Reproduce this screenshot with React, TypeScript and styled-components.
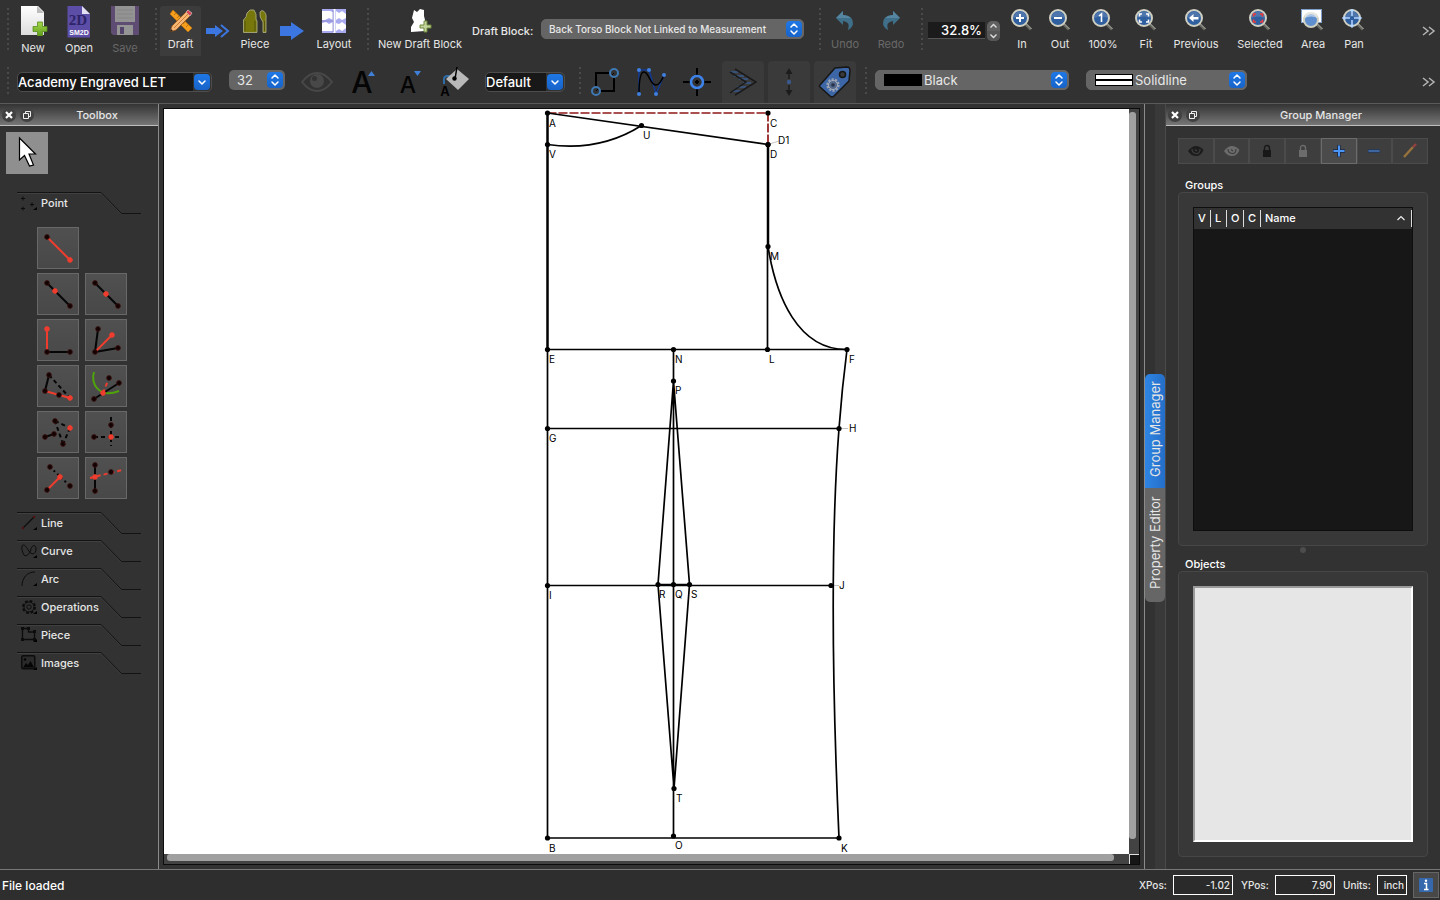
import React from "react";
import styled, { createGlobalStyle, css } from "styled-components";

const GlobalStyle = createGlobalStyle`
  *, *::before, *::after { box-sizing: border-box; }
  html, body { margin: 0; padding: 0; background: #323232; }
  body, button, input, select {
    font-family: Inter, "Liberation Sans", sans-serif;
    font-size: 11px;
    color: #e6e6e6;
  }
  button { margin: 0; padding: 0; border: 0; background: none; }
  svg { display: block; }
`;

/* ---------- shell ---------- */

const Window = styled.div`
  display: flex;
  flex-direction: column;
  min-height: 100vh;
  background: #323232;
`;

const Toolbars = styled.header`
  border-bottom: 1px solid #5a5a5a;
`;

const Toolbar = styled.div<{ $height: number }>`
  display: flex;
  align-items: center;
  height: ${(p) => p.$height}px;
  overflow: hidden;
  white-space: nowrap;
`;

const ToolGroup = styled.div<{ $lead?: number }>`
  display: flex;
  align-items: center;
  flex: none;
  padding-left: ${(p) => p.$lead ?? 0}px;
`;

const Handle = styled.span<{ $dots: number }>`
  flex: none;
  width: 10px;
  height: ${(p) => p.$dots * 5}px;
  background: linear-gradient(#4a4a4a 2px, transparent 2px) 7px 0 / 2px 5px repeat-y;
`;

const ToolButton = styled.button<{ $width: number; $large?: boolean; $active?: boolean }>`
  display: flex;
  flex-direction: column;
  align-items: center;
  flex: none;
  gap: ${(p) => (p.$large ? 5 : 4)}px;
  width: ${(p) => p.$width}px;
  height: 50px;
  padding-top: ${(p) => (p.$large ? 0 : 3)}px;
  border-radius: 3px 3px 0 0;
  line-height: 14px;
  background: ${(p) => (p.$active ? "#3c3c3c" : "transparent")};
  &:disabled { color: #696969; }
`;

const IconClip = styled.span`
  display: block;
  height: 30px;
`;

const IconButton = styled.button<{ $active?: boolean }>`
  display: flex;
  align-items: center;
  justify-content: center;
  flex: none;
  width: 46px;
  height: 42px;
  ${(p) =>
    p.$active &&
    css`
      width: 42px;
      margin: 0 2px;
      background: #3a3a3a;
      border-radius: 4px 4px 0 0;
    `}
`;

const FlowArrow = styled.span`
  display: flex;
  justify-content: center;
  width: 34px;
`;

const Overflow = styled.button`
  margin-left: auto;
  padding-right: 4px;
`;

const BlockLabel = styled.label`
  flex: none;
  width: 69px;
  font-weight: 500;
`;

const SelectWrap = styled.span<{ $width: number; $dark?: boolean; $lead?: number }>`
  position: relative;
  display: flex;
  flex: none;
  width: ${(p) => p.$width}px;
  margin-left: ${(p) => p.$lead ?? 0}px;
  margin-top: ${(p) => (p.$dark ? 0 : -4)}px;
`;

const Select = styled.select<{ $dark?: boolean; $small?: boolean; $indent?: number }>`
  appearance: none;
  width: 100%;
  height: 20px;
  margin: 0;
  padding: 0 20px 0 ${(p) => p.$indent ?? 0}px;
  border: 1px solid ${(p) => (p.$dark ? "#4d4d4d" : "#666")};
  border-radius: 5px;
  background: ${(p) =>
    p.$dark ? "linear-gradient(90deg, #181818 calc(100% - 18px), #323232 calc(100% - 18px))" : "#656565"};
  font-size: ${(p) => (p.$small ? 10 : 13)}px;
  font-weight: ${(p) => (p.$small || p.$dark ? 500 : 400)};
  color: ${(p) => (p.$dark ? "#fff" : "#e8e8e8")};
`;

const BlueCap = styled.span`
  position: absolute;
  top: 2px;
  right: 2px;
  width: 16px;
  height: 16px;
  border-radius: 4px;
  background: linear-gradient(#1f78e6, #1763c9);
  pointer-events: none;
`;

const Swatch = styled.span<{ $lined?: boolean }>`
  position: absolute;
  left: 9px;
  top: 4px;
  width: 38px;
  height: 12px;
  border: 1px solid #000;
  background: ${(p) => (p.$lined ? "linear-gradient(#fff 4px, #000 4px, #000 6px, #fff 6px)" : "#000")};
  pointer-events: none;
`;

const SizeInput = styled.input`
  width: 100%;
  height: 20px;
  padding: 0 20px 0 8px;
  border: 0;
  border-radius: 5px;
  background: #656565;
  font-size: 13px;
`;

const ZoomInput = styled.input`
  width: 57px;
  height: 17px;
  padding: 0 3px 0 0;
  border: 0;
  border-bottom: 1px solid #555;
  background: #1b1b1b;
  font-size: 13px;
  font-weight: 500;
  color: #fff;
  text-align: right;
`;

const Stepper = styled.span`
  display: flex;
  flex-direction: column;
  width: 13px;
  height: 20px;
  margin: 0 3px 0 2px;
  border-radius: 5px;
  overflow: hidden;
  background: #606060;
`;

const StepButton = styled.button`
  display: flex;
  align-items: center;
  justify-content: center;
  height: 10px;
  & + & { background: #565656; }
`;

const Workspace = styled.main`
  display: flex;
  flex: 1;
`;

/* ---------- toolbox ---------- */

const Toolbox = styled.aside`
  flex: none;
  width: 159px;
  border-right: 1px solid #8b8b8b;
`;

const DockTitle = styled.div`
  display: flex;
  align-items: center;
  height: 22px;
  padding: 0 2px;
  background: linear-gradient(#343434, #767676);
  border-bottom: 1px solid #bdbdbd;
`;

const DockName = styled.h2`
  flex: 1;
  margin: 0;
  font-size: 11px;
  font-weight: 500;
  text-align: center;
`;

const DockButton = styled.button`
  width: 14px;
  height: 14px;
  margin-right: 4px;
  border-radius: 7px;
  background: #414141;
`;

const PointerTool = styled.button`
  display: block;
  width: 42px;
  height: 42px;
  margin: 6px 0 18px 6px;
  background: #8f8f8f;
`;

const Drawers = styled.nav`
  display: flex;
  flex-direction: column;
  gap: 6px;
  padding-left: 17px;
`;

const Drawer = styled.button`
  position: relative;
  display: flex;
  align-items: center;
  gap: 3px;
  width: 124px;
  height: 22px;
  padding-left: 4px;
  font-weight: 500;
`;

const DrawerEdge = styled.svg`
  position: absolute;
  left: 0;
  top: 0;
`;

const Tiles = styled.div`
  display: grid;
  grid-template-columns: 42px 42px;
  gap: 4px 6px;
  padding: 7px 0 7px 20px;
`;

const Tile = styled.button<{ $wide?: boolean }>`
  width: 42px;
  height: 42px;
  border: 1px solid #686868;
  background: linear-gradient(#505050, #484848);
  ${(p) => p.$wide && "grid-column: 1 / 3;"}
`;

/* ---------- drawing area ---------- */

const CanvasArea = styled.section`
  display: flex;
  flex: 1;
  min-width: 0;
  padding: 4px;
`;

const CanvasFrame = styled.div`
  display: grid;
  flex: 1;
  grid-template: minmax(0, 1fr) 10px / minmax(0, 1fr) 10px;
  min-height: 757px;
  border: 1px solid #0c0c0c;
  background: #434343;
`;

const Sheet = styled.div`
  display: flex;
  background: #fff;
`;

const Drawing = styled.svg`
  width: 100%;
  height: 100%;
  font-size: 10px;
`;

const VTrack = styled.div`
  display: flex;
  padding: 3px 3px 15px 0;
`;

const HTrack = styled.div`
  display: flex;
  padding: 0 15px 3px 3px;
`;

const Thumb = styled.div`
  flex: 1;
  background: #a0a0a0;
  border-radius: 3px;
`;

const Corner = styled.div`
  border: solid #e0e0e0;
  border-width: 1px 0 0 1px;
  background: #161616;
`;

/* ---------- right docks ---------- */

const RightDock = styled.aside`
  display: flex;
  flex: none;
  width: 296px;
  border-left: 1px solid #8b8b8b;
`;

const DockTabs = styled.div`
  display: flex;
  flex-direction: column;
  justify-content: center;
  width: 21px;
  padding-top: 3px;
  background: linear-gradient(90deg, #323232 10px, #393939 10px);
  border-right: 1px solid #4a4a4a;
`;

const DockTab = styled.button<{ $active?: boolean }>`
  height: 114px;
  writing-mode: vertical-rl;
  transform: rotate(180deg);
  text-align: center;
  padding-top: 4px;
  font-size: 13px;
  line-height: 20px;
  white-space: nowrap;
  border-radius: ${(p) => (p.$active ? "0 0 5px 5px" : "5px 5px 0 0")};
  background: ${(p) => (p.$active ? "linear-gradient(270deg, #2f85e4, #246ec8)" : "#666")};
`;

const Panel = styled.div`
  display: flex;
  flex: 1;
  flex-direction: column;
`;

const PanelBody = styled.div`
  display: flex;
  flex: 1;
  flex-direction: column;
  padding: 12px;
`;

const GroupTools = styled.div`
  display: flex;
  height: 26px;
  margin-bottom: 14px;
`;

const GroupTool = styled.button<{ $active?: boolean }>`
  display: flex;
  align-items: center;
  justify-content: center;
  flex: 1;
  border: 1px solid ${(p) => (p.$active ? "#6b6b6b" : "#4b4b4b")};
  background: ${(p) => (p.$active ? "#4b4b4b" : "#3e3e3e")};
`;

const SectionTitle = styled.h3`
  margin: 0;
  padding-left: 7px;
  font-size: 11px;
  line-height: 14px;
  font-weight: 500;
  color: #fff;
`;

const Box = styled.section<{ $share: number }>`
  display: flex;
  flex: ${(p) => p.$share} ${(p) => p.$share} ${(p) => p.$share}px;
  padding: 14px;
  border: 1px solid #464646;
  border-radius: 4px;
  background: #383838;
`;

const Splitter = styled.div`
  align-self: center;
  width: 6px;
  height: 6px;
  margin: 1px 0 4px;
  border-radius: 3px;
  background: #4c4c4c;
`;

const Tree = styled.div`
  flex: 1;
  border: 1px solid #0e0e0e;
  background: #171717;
`;

const TreeTable = styled.table`
  width: 100%;
  table-layout: fixed;
  border-collapse: collapse;
  background: #323232;
`;

const Th = styled.th<{ $width?: number }>`
  width: ${(p) => (p.$width ? `${p.$width}px` : "auto")};
  height: 21px;
  padding: 0 0 2px 4px;
  font-weight: 500;
  color: #fff;
  text-align: left;
  background: linear-gradient(#dcdcdc, #dcdcdc) right center / 1px 17px no-repeat;
`;

const SortRow = styled.span`
  display: flex;
  align-items: center;
  justify-content: space-between;
  padding-right: 6px;
`;

const ObjectList = styled.div`
  flex: 1;
  border: 2px solid #fff;
  border-top-color: #9a9a9a;
  border-left-color: #9a9a9a;
  background: #e6e6e6;
`;

/* ---------- status bar ---------- */

const StatusBar = styled.footer`
  display: flex;
  align-items: center;
  height: 31px;
  padding: 0 1px 0 2px;
  border-top: 1px solid #777;
  background: #2e2e2e;
`;

const StatusText = styled.span`
  flex: 1;
  font-size: 12px;
  font-weight: 500;
  color: #fff;
`;

const StatusField = styled.label<{ $width: number }>`
  display: grid;
  grid-template-columns: ${(p) => p.$width}px auto;
  align-items: center;
  margin-left: 8px;
  font-size: 10px;
  font-weight: 500;
`;

const StatusInput = styled.input<{ $width: number }>`
  width: ${(p) => p.$width}px;
  height: 20px;
  padding: 0 2px;
  border: 1px solid #fff;
  background: #2a2a2a;
  font-size: 10px;
  font-weight: 500;
  text-align: right;
`;

const InfoButton = styled.button`
  display: flex;
  align-items: center;
  justify-content: center;
  width: 26px;
  height: 26px;
  margin-left: 6px;
  border: 1px solid #666;
  background: #484848;
`;

/* ---------- icons ---------- */

const NewIcon = () => (
  <svg width="30" height="30" viewBox="0 0 30 30">
    <defs>
      <linearGradient id="paper" x1="0" y1="0" x2="0" y2="1">
        <stop offset="0" stopColor="#fff" />
        <stop offset="1" stopColor="#dcdcdc" />
      </linearGradient>
      <linearGradient id="green" x1="0" y1="0" x2="0" y2="1">
        <stop offset="0" stopColor="#a6d84c" />
        <stop offset="1" stopColor="#5f9c1c" />
      </linearGradient>
    </defs>
    <path d="M3 0H20L26 6V29H3Z" fill="url(#paper)" />
    <path d="M19 0V7H26Z" fill="#bcbcbc" />
    <path d="M19.500 16h5v4.500H29v5h-4.500V30h-5v-4.500H15v-5h4.500Z" fill="url(#green)" stroke="#568c1d" strokeWidth="0.800" />
  </svg>
);

const OpenIcon = () => (
  <svg width="30" height="32" viewBox="0 0 30 32">
    <path d="M3.500 0H18L26 8V31.500H3.500Z" fill="#5c4da6" />
    <path d="M18 0L26 8H18Z" fill="#e4e0f2" />
    <text x="14" y="19" textAnchor="middle" fontFamily="Liberation Serif, serif" fontWeight="bold" fontSize="15" fill="#2c2468">2D</text>
    <text x="15" y="29" textAnchor="middle" fontFamily="Liberation Sans, sans-serif" fontWeight="bold" fontSize="7" fill="#fff">SM2D</text>
  </svg>
);

const SaveIcon = () => (
  <svg width="30" height="30" viewBox="0 0 30 30">
    <path d="M1 0H29V29H3L1 27Z" fill="#5f4c73" />
    <rect x="5" y="0" width="20" height="16" fill="#939393" />
    <path d="M7 4H23M7 8H23M7 12H23" stroke="#858585" />
    <rect x="7" y="19" width="16" height="10" fill="#959595" />
    <rect x="10" y="21" width="4" height="7" fill="#54436a" />
  </svg>
);

const DraftIcon = () => (
  <svg width="24" height="24" viewBox="0 0 24 24">
    <path d="M4 1L23 19L19 23L1 5Z" fill="#f59d1c" stroke="#c87509" strokeWidth="0.600" />
    <path d="M5 6l2-2M8 9l2-2M14 15l2-2M17 18l2-2" stroke="#b06f0e" strokeWidth="0.800" />
    <path d="M1 23L3 17L17 3L21 7L7 21Z" fill="#f5b673" stroke="#8e4a12" strokeWidth="0.700" />
    <path d="M5 19L19 5" stroke="#d07a30" />
    <path d="M1 23L2 20L4 22Z" fill="#222" />
    <path d="M17 3L19 1L23 4L21 7Z" fill="#d84452" stroke="#ddd" strokeWidth="0.600" />
  </svg>
);

const DoubleArrow = () => (
  <svg width="24" height="14" viewBox="0 0 24 14">
    <path d="M0 4H9V1L17 7L9 13V10H0Z" fill="#3c76e0" />
    <path d="M15 1L22 7L15 13" fill="none" stroke="#3c76e0" strokeWidth="2" />
  </svg>
);

const BigArrow = () => (
  <svg width="24" height="18" viewBox="0 0 24 18">
    <path d="M0 4H11V0L24 9L11 18V14H0Z" fill="#3c76e0" />
  </svg>
);

const PieceIcon = () => (
  <svg width="24" height="24" viewBox="0 0 24 24">
    <g fill="#77770c" stroke="#a9a97c" strokeWidth="0.900">
      <path d="M0.500 23.500V11Q4 8 4 4L7 1H11Q14 5 13 10L14 12V23.500Z" />
      <path d="M20 23.500V13Q16 8 17 3L19 1.500Q24 3 23 10V23.500Z" />
    </g>
    <path d="M2 22V12M12 22V12M21.500 22V12" stroke="#55550a" />
  </svg>
);

const LayoutIcon = () => (
  <svg width="24" height="24" viewBox="0 0 24 24">
    <rect width="24" height="24" fill="#a9a9f0" />
    <path d="M0 2H8L11 3V11L7 9L3 11H0ZM0 14L4 13L7 15L11 13V22H0ZM14 2L17 4L20 2L24 5V9L20 11L17 9L14 11ZM14 14L17 15L20 13L24 16V19L20 22L17 20L14 22Z" fill="#fff" />
    <path d="M12.500 0V24" stroke="#fff" strokeWidth="2" />
    <path d="M11 1V23M0 12H10" stroke="#7f7fc4" strokeWidth="0.700" />
  </svg>
);

const BlockIcon = () => (
  <svg width="24" height="24" viewBox="0 0 24 24">
    <path d="M6 1L9 3L12 0L16 1V7L17 11L17 22L3 23L3 18L6 13L4 9Z" fill="#fff" />
    <path d="M16 12h3v4h4v3h-4v4h-3v-4h-4v-3h4Z" fill="#c3d39c" stroke="#6c8a3a" />
  </svg>
);

const UndoIcon = ({ flip }: { flip?: boolean }) => (
  <svg width="24" height="24" viewBox="0 0 24 24">
    <g transform={flip ? "matrix(-1 0 0 1 24 0)" : undefined}>
      <path d="M3 9L10 2V6Q21 7 20 15Q19 19 15 21Q18 13 10 12V16Z" fill="#3f6f89" />
      <path d="M3 9L10 2V6Q15 6 18 9Z" fill="#5585a0" />
    </g>
  </svg>
);

type LensKind = "in" | "out" | "one" | "fit" | "prev" | "sel" | "area" | "pan";

const LensIcon = ({ kind }: { kind: LensKind }) => (
  <svg width="24" height="24" viewBox="0 0 24 24">
    {kind === "area" && <rect x="0.500" y="0.500" width="20" height="13" fill="#fff" stroke="#7fa0cc" />}
    <path d="M15 14.500L21 20.500" stroke="#686862" strokeWidth="3" />
    <path d="M15 13.500L21.500 20" stroke="#a9a9a0" strokeWidth="1" />
    <circle cx="10" cy={kind === "area" ? 11 : 9} r={kind === "area" ? 7 : 8} fill={kind === "area" ? "#5f8fce" : "#2f5f9f"} stroke="#cfcfc2" strokeWidth="2" />
    <path d="M3.500 9A6.500 6.500 0 0 1 16.500 9Q10 6 3.500 9Z" fill="#fff" opacity={kind === "area" ? 0.5 : 0.15} />
    {kind === "in" && <path d="M10 5V13M6 9H14" stroke="#fff" strokeWidth="2" />}
    {kind === "out" && <path d="M6 9H14" stroke="#fff" strokeWidth="2" />}
    {kind === "one" && <path d="M8 7L10.500 5V13" fill="none" stroke="#fff" strokeWidth="1.600" />}
    {(kind === "fit" || kind === "sel") && (
      <path
        d="M5.500 7.500V5H8M12 5H14.500V7.500M14.500 10.500V13H12M8 13H5.500V10.500"
        fill={kind === "fit" ? "none" : "#5c5f80"}
        stroke={kind === "fit" ? "#fff" : "#f03b3b"}
        strokeWidth="1.600"
      />
    )}
    {kind === "prev" && <path d="M5 9L9.500 5V8H14.500V10.500H9.500V13Z" fill="#fff" />}
    {kind === "pan" && (
      <path d="M10 0V7M10 11V18M1 9H8M12 9H19M8.500 2L10 0L11.500 2M8.500 16L10 18L11.500 16M3 7.500L1 9L3 10.500M17 7.500L19 9L17 10.500" fill="none" stroke="#b5d6ff" strokeWidth="1.500" />
    )}
  </svg>
);

const Chevrons = () => (
  <svg width="14" height="10" viewBox="0 0 14 10">
    <path d="M1 1L6 5L1 9M7 1L12 5L7 9" fill="none" stroke="#b4b4b4" strokeWidth="1.500" />
  </svg>
);

const CapArrows = ({ single }: { single?: boolean }) => (
  <BlueCap>
    <svg width="16" height="16" viewBox="0 0 16 16">
      <path
        d={single ? "M5 7L8 10L11 7" : "M5 6L8 3L11 6M5 10L8 13L11 10"}
        fill="none"
        stroke="#fff"
        strokeWidth="1.500"
        strokeLinecap="round"
        strokeLinejoin="round"
      />
    </svg>
  </BlueCap>
);

const BigEyeIcon = () => (
  <svg width="32" height="22" viewBox="0 0 32 22">
    <path d="M1 11Q8 2 16 2T31 11Q24 20 16 20T1 11Z" fill="none" stroke="#484848" strokeWidth="2" />
    <circle cx="16" cy="10" r="7" fill="#484848" />
    <circle cx="13.500" cy="7.500" r="2.500" fill="#333" />
  </svg>
);

const LetterIcon = ({ down }: { down?: boolean }) => (
  <svg width="32" height="40" viewBox="-2 -6 32 40">
    <text x="13" y="25" textAnchor="middle" fontSize={down ? 23 : 30} fontWeight="500" fill="#050505">A</text>
    <path d={down ? "M19 3H26L22.500 8Z" : "M19 8H26L22.500 3Z"} fill="#4080d8" />
  </svg>
);

const BucketIcon = () => (
  <svg width="32" height="38" viewBox="-2 -4 32 38">
    <path d="M3 17V12Q3 9 7 9H10" fill="none" stroke="#2f6da8" strokeWidth="2" />
    <path d="M5 12L16 2L28 12L17 23Z" fill="#b9b9b9" />
    <path d="M16 0L14 12" stroke="#000" strokeWidth="1.500" />
    <circle cx="13.500" cy="11.500" r="2.200" fill="#000" />
    <text x="4" y="29" textAnchor="middle" fontSize="13" fontWeight="600" fill="#000">A</text>
  </svg>
);

const SquareNodesIcon = () => (
  <svg width="28" height="28" viewBox="0 0 28 28">
    <rect x="5" y="5" width="18" height="18" fill="none" stroke="#000" strokeWidth="2" />
    <circle cx="23" cy="5" r="4" fill="#323232" stroke="#3f79b3" strokeWidth="2" />
    <circle cx="5" cy="23" r="4" fill="#323232" stroke="#3f79b3" strokeWidth="2" />
    <path d="M21 7L23 5M5 23L7 21" stroke="#000" />
  </svg>
);

const CurveNodesIcon = () => (
  <svg width="30" height="30" viewBox="0 0 30 30">
    <path d="M3 27V3H13L20 27L28 8" fill="none" stroke="#123a94" strokeWidth="1.500" />
    <path d="M3 27Q3 5 8 5C13 5 14 18 20 18Q24 18 28 8" fill="none" stroke="#000" strokeWidth="1.500" />
    {[[3, 27], [3, 3], [13, 3], [20, 27], [28, 8]].map(([x, y]) => (
      <circle key={`${x}-${y}`} cx={x} cy={y} r="2" fill="#3f80e0" />
    ))}
  </svg>
);

const CrosshairIcon = () => (
  <svg width="28" height="28" viewBox="0 0 28 28">
    <path d="M14 0V9M14 19V28M0 14H9M19 14H28M12 14H16M14 12V16" stroke="#000" strokeWidth="2" />
    <circle cx="14" cy="14" r="6" fill="none" stroke="#3e83ea" strokeWidth="2.600" />
  </svg>
);

const HatchIcon = () => (
  <svg width="28" height="28" viewBox="0 0 28 28">
    <path d="M1 4H9M5 8H15M10 11H19M14 15H22M8 19H17M4 23H12" stroke="#38598f" strokeWidth="1.500" />
    <path d="M6 1L27 14L6 27M1 4L17 14L1 25" fill="none" stroke="#1a1a1a" strokeWidth="1.500" />
  </svg>
);

const SpreadIcon = () => (
  <svg width="10" height="28" viewBox="0 0 10 28">
    <path d="M5 3V11M5 17V25" stroke="#1c1c1c" strokeWidth="1.500" />
    <path d="M1.500 6L5 0L8.500 6ZM1.500 22L5 28L8.500 22Z" fill="#1c1c1c" />
    <circle cx="5" cy="14" r="2.200" fill="#39598c" />
  </svg>
);

const TagIcon = () => (
  <svg width="34" height="34" viewBox="0 0 34 34">
    <path d="M2 20L17 3L29 2Q32 2 32 6L31 16L16 31Q14 33 12 31L2 22Q1 21 2 20Z" fill="#3c66a6" stroke="#161616" strokeWidth="1.500" />
    <circle cx="24.500" cy="9.500" r="3" fill="#3a3a3a" stroke="#161616" strokeWidth="1.500" />
    <circle cx="15" cy="20" r="5.500" fill="none" stroke="#9aa3b2" strokeWidth="2.400" strokeDasharray="2.200 1.200" />
    <circle cx="15" cy="20" r="4.500" fill="#55698c" stroke="#a9b0bd" />
    <circle cx="15" cy="20" r="1.800" fill="#26324a" />
  </svg>
);

const CloseGlyph = () => (
  <svg width="14" height="14" viewBox="0 0 14 14">
    <path d="M4 4L10 10M10 4L4 10" stroke="#fff" strokeWidth="2.200" />
  </svg>
);

const FloatGlyph = () => (
  <svg width="14" height="14" viewBox="0 0 14 14">
    <path d="M5.500 5.500V3.500H10.500V8.500H8.500M3.500 5.500H8.500V10.500H3.500Z" fill="none" stroke="#eee" />
  </svg>
);

const PointerGlyph = () => (
  <svg width="42" height="42" viewBox="0 0 42 42">
    <path d="M13.500 6L13.500 28L18.500 23.500L23.500 34L27.500 33L23 22H29.500Z" fill="#fff" stroke="#000" strokeWidth="1.200" />
  </svg>
);

const EyeGlyph = ({ color }: { color: string }) => (
  <svg width="16" height="14" viewBox="0 0 16 14">
    <path d="M0 7Q4 2 8 2T15.500 6Q13 12 8 12T0 7Z" fill={color} />
    <path d="M4 5Q4 9 8 9.500T12 5M7 5.500L9 7" fill="none" stroke="#3e3e3e" strokeWidth="1.200" />
  </svg>
);

const LockGlyph = ({ color }: { color: string }) => (
  <svg width="10" height="14" viewBox="0 0 10 14">
    <rect x="1" y="6" width="8" height="7" fill={color} />
    <path d="M2.500 6V4Q2.500 1.500 5 1.500T7.500 4V6" fill="none" stroke={color} strokeWidth="1.400" />
  </svg>
);

const PlusGlyph = () => (
  <svg width="14" height="14" viewBox="0 0 14 14">
    <path d="M7 1V13M1 7H13" stroke="#182a48" strokeWidth="3.500" />
    <path d="M7 1.500V12.500M1.500 7H12.500" stroke="#4a94f5" strokeWidth="2" />
  </svg>
);

const MinusGlyph = () => (
  <svg width="14" height="14" viewBox="0 0 14 14">
    <path d="M1 7H13" stroke="#263a5c" strokeWidth="3.500" />
    <path d="M1.500 7H12.500" stroke="#3f659f" strokeWidth="2" />
  </svg>
);

const PencilGlyph = () => (
  <svg width="16" height="16" viewBox="0 0 16 16">
    <path d="M2 14L11 4" stroke="#96733a" strokeWidth="2.400" />
    <path d="M11 4L14 1" stroke="#964040" strokeWidth="2.400" />
  </svg>
);

const InfoGlyph = () => (
  <svg width="14" height="14" viewBox="0 0 14 14">
    <rect width="14" height="14" rx="1" fill="#3568ad" />
    <path d="M5 5.500H7.500V11.500M5 11.500H9.500" fill="none" stroke="#fff" strokeWidth="1.500" />
    <circle cx="7" cy="2.800" r="1.200" fill="#fff" />
  </svg>
);

/* ---------- point tool tiles ---------- */

type Seg = [number, number, number, number, ("k" | "r")?, ("dash" | "dot")?];
type Dot = [number, number, ("k" | "r")?];

interface TileSpec {
  name: string;
  segs: Seg[];
  dots: Dot[];
  arc?: string;
}

const RED = "#ee3d2e";

const tiles: TileSpec[] = [
  { name: "Length and angle", segs: [[10, 10, 33, 33, "r"]], dots: [[10, 10], [33, 33, "r"]] },
  { name: "On line", segs: [[10, 10, 33, 33]], dots: [[10, 10], [33, 33], [18, 18, "r"]] },
  { name: "Midpoint", segs: [[10, 10, 33, 33]], dots: [[10, 10], [33, 33], [21, 21, "r"]] },
  { name: "On perpendicular", segs: [[10, 33, 33, 33], [10, 10, 10, 33, "r"]], dots: [[10, 33], [33, 33], [10, 10, "r"]] },
  { name: "On bisector", segs: [[10, 33, 13, 10], [10, 33, 33, 29], [10, 33, 27, 16, "r"]], dots: [[10, 33], [13, 10], [33, 29], [27, 16, "r"]] },
  { name: "Shoulder", segs: [[12, 10, 8, 26], [12, 10, 33, 33, "k", "dash"], [8, 26, 33, 33, "r"]], dots: [[12, 10], [8, 26], [22, 30], [33, 33, "r"]] },
  { name: "Arc and line", segs: [[9, 34, 34, 18], [18, 28, 24, 13, "r", "dash"]], dots: [[9, 34], [34, 18], [24, 13], [18, 28, "r"]], arc: "M9 7C5 18 14 34 34 26" },
  { name: "Triangle", segs: [[8, 26, 17, 23], [18, 10, 33, 17, "k", "dash"], [33, 17, 26, 33, "k", "dash"], [26, 33, 18, 10, "k", "dash"]], dots: [[8, 26], [17, 23], [18, 10], [26, 33], [33, 17, "r"]] },
  { name: "Intersect XY", segs: [[9, 26, 35, 26, "k", "dash"], [26, 6, 26, 35, "k", "dash"]], dots: [[9, 26], [26, 14], [26, 26, "r"]] },
  { name: "Perpendicular to line", segs: [[13, 10, 33, 29, "k", "dot"], [23, 20, 10, 33, "r"]], dots: [[13, 10], [33, 29], [10, 33], [23, 20, "r"]] },
  { name: "Line and axis", segs: [[10, 8, 10, 34], [5, 21, 37, 13, "r", "dash"]], dots: [[10, 8], [10, 34], [26, 15], [10, 20, "r"]] },
];

const TileGlyph = ({ spec }: { spec: TileSpec }) => (
  <svg width="40" height="40" viewBox="1 1 40 40">
    {spec.arc && <path d={spec.arc} fill="none" stroke="#4fa30a" strokeWidth="2" />}
    {spec.segs.map(([x1, y1, x2, y2, c, d], i) => (
      <line
        key={i}
        x1={x1}
        y1={y1}
        x2={x2}
        y2={y2}
        stroke={c === "r" ? RED : "#060606"}
        strokeWidth="2"
        strokeDasharray={d === "dash" ? "4 3" : d === "dot" ? "2 3" : undefined}
      />
    ))}
    {spec.dots.map(([cx, cy, c], i) => (
      <circle key={i} cx={cx} cy={cy} r="2.400" fill={c === "r" ? RED : "#120303"} stroke={c === "r" ? RED : "#3c1010"} strokeWidth="0.800" />
    ))}
  </svg>
);

/* ---------- drawer icons ---------- */

const drawerArt: Record<string, React.ReactNode> = {
  Point: <path d="M0 3.500H4M2 1.500V5.500M9 9.500H13M11 7.500V11.500M0 13.500H4M2 11.500V15.500" stroke="#0c0c0c" />,
  Line: (
    <>
      <path d="M2 13L13 2" stroke="#0c0c0c" strokeWidth="1.300" />
      <circle cx="13" cy="2" r="1.300" fill="#4c1212" />
      <circle cx="2" cy="13" r="1.300" fill="#4c1212" />
    </>
  ),
  Curve: <path d="M1 3C3 0 5 4 8 8C10 12 15 12 15 6C15 1 11 2 10 6C9 12 4 14 3 12C2 10 0 6 1 3Z" fill="none" stroke="#0c0c0c" />,
  Arc: <path d="M1 15C1 7 6 1 14 1" fill="none" stroke="#0c0c0c" />,
  Operations: (
    <>
      <circle cx="8" cy="8" r="6" fill="none" stroke="#0c0c0c" strokeWidth="2" strokeDasharray="2.700 2" />
      <circle cx="8" cy="8" r="5" fill="none" stroke="#0c0c0c" />
      <circle cx="8" cy="8" r="2.200" fill="none" stroke="#0c0c0c" />
    </>
  ),
  Piece: (
    <>
      <path d="M1.500 1.500H7.500V5H13.500V12.500H1.500Z" fill="none" stroke="#0c0c0c" strokeWidth="1.300" />
      <path d="M0 0h3v3h-3zM6 0h3v3h-3zM12 3h3v3h-3zM12 11h3v3h-3zM0 11h3v3h-3z" fill="#0c0c0c" />
    </>
  ),
  Images: (
    <>
      <rect x="0.750" y="0.750" width="13" height="13" rx="1.500" fill="#2a2a2a" stroke="#0c0c0c" strokeWidth="1.500" />
      <path d="M2 12.500L5 8L7 10L9.500 6L13 12.500Z" fill="#050505" />
      <circle cx="4" cy="4.500" r="1.300" fill="#050505" />
    </>
  ),
};

const DrawerTab = ({ name }: { name: string }) => (
  <Drawer type="button">
    <DrawerEdge width="124" height="22" viewBox="0 0 124 22">
      <path d="M0 1.500H84L104.500 22H124" fill="none" stroke="#4a4a4a" strokeWidth="0.600" />
      <path d="M0 0.500H84L104.500 21.500H124" fill="none" stroke="#131313" />
    </DrawerEdge>
    <svg width="17" height="16" viewBox="0 0 17 16">
      {drawerArt[name]}
      <path d="M16 12V15H12Z" fill="#000" />
    </svg>
    {name}
  </Drawer>
);

/* ---------- pattern ---------- */

interface PatternPoint {
  name: string;
  x: number;
  y: number;
  tx: number;
  ty: number;
}

const pt = (name: string, x: number, y: number, tx: number, ty: number): PatternPoint => ({ name, x, y, tx, ty });

const points: PatternPoint[] = [
  pt("A", 547.5, 113, 549, 127),
  pt("C", 768, 113, 770, 127),
  pt("V", 547.5, 144.5, 549, 158),
  pt("D", 768, 144.5, 770, 158),
  pt("D1", 768, 144.5, 778, 144),
  pt("U", 641.5, 125.5, 643, 139),
  pt("M", 768, 246.5, 770, 260),
  pt("E", 547.5, 349.5, 549, 363),
  pt("N", 673.5, 349.5, 675, 363),
  pt("L", 767.5, 349.5, 769, 363),
  pt("F", 847, 349.5, 849, 363),
  pt("P", 673.5, 381, 675, 394),
  pt("G", 547.5, 428.5, 549, 442),
  pt("H", 839, 428.5, 849, 432),
  pt("I", 547.5, 585.5, 549, 599),
  pt("R", 658, 584.5, 659, 598),
  pt("Q", 673.5, 584.5, 675, 598),
  pt("S", 689.5, 584.5, 691, 598),
  pt("J", 831, 585.5, 839, 589),
  pt("T", 674, 788.5, 676, 802),
  pt("B", 547.5, 838, 549, 852),
  pt("O", 673.5, 836, 675, 849),
  pt("K", 839, 838, 841, 852),
];

const Pattern = () => (
  <Drawing viewBox="164 109 965 745" preserveAspectRatio="xMidYMin meet">
    <g fill="none" stroke="#000" strokeWidth="1.700">
      <path d="M547.500 113H768V144.500" stroke="#8e1717" strokeDasharray="9 2" />
      <path d="M768 144.500L779 141M839 428.500H848M831 585.500H839" stroke="#aaa" strokeWidth="0.700" />
      <path d="M547.500 113V349.500M768 144.500V246.500" strokeWidth="2.500" />
      <path d="M547.500 349.500V838H839M547.500 113L768 144.500M767.500 246.500V349.500M547.500 349.500H847M547.500 428.500H839M547.500 585.500H831" />
      <path d="M673.500 349.500V836M658 584.500H689.500M673.500 381L658 584.500L674 788.500L689.500 584.500Z" />
      <path d="M547.500 144.500C580 149 611 145 641.500 125.500" />
      <path d="M768 246.500C776 297 798 350 847 349.500Q842 388 839 428.500C832 520 831 660 839 838" />
    </g>
    {points.map((p) => (
      <g key={p.name}>
        <circle cx={p.x} cy={p.y} r="2.600" />
        <text x={p.tx} y={p.ty}>{p.name}</text>
      </g>
    ))}
  </Drawing>
);

/* ---------- page ---------- */

const lenses: { kind: LensKind; label: string; width: number }[] = [
  { kind: "in", label: "In", width: 38 },
  { kind: "out", label: "Out", width: 38 },
  { kind: "one", label: "100%", width: 48 },
  { kind: "fit", label: "Fit", width: 38 },
  { kind: "prev", label: "Previous", width: 62 },
  { kind: "sel", label: "Selected", width: 66 },
  { kind: "area", label: "Area", width: 40 },
  { kind: "pan", label: "Pan", width: 42 },
];

const TitleBar = ({ name }: { name: string }) => (
  <DockTitle>
    <DockButton type="button" aria-label={`Close ${name}`}><CloseGlyph /></DockButton>
    <DockButton type="button" aria-label={`Float ${name}`}><FloatGlyph /></DockButton>
    <DockName>{name}</DockName>
  </DockTitle>
);

export default function App() {
  return (
    <Window>
      <GlobalStyle />
      <Toolbars>
        <Toolbar $height={61}>
          <Handle $dots={9} />
          <ToolGroup>
            <ToolButton $width={46} $large><NewIcon />New</ToolButton>
            <ToolButton $width={46} $large><IconClip><OpenIcon /></IconClip>Open</ToolButton>
            <ToolButton $width={46} $large disabled><SaveIcon />Save</ToolButton>
          </ToolGroup>
          <Handle $dots={9} />
          <ToolGroup $lead={2}>
            <ToolButton $width={41} $active><DraftIcon />Draft</ToolButton>
            <FlowArrow><DoubleArrow /></FlowArrow>
            <ToolButton $width={40}><PieceIcon />Piece</ToolButton>
            <FlowArrow><BigArrow /></FlowArrow>
            <ToolButton $width={50}><LayoutIcon />Layout</ToolButton>
          </ToolGroup>
          <ToolGroup $lead={1}><Handle $dots={9} /></ToolGroup>
          <ToolGroup $lead={6}>
            <ToolButton $width={88}><BlockIcon />New Draft Block</ToolButton>
          </ToolGroup>
          <ToolGroup $lead={8}>
            <BlockLabel htmlFor="block">Draft Block:</BlockLabel>
            <SelectWrap $width={263}>
              <Select id="block" $small $indent={7}>
                <option>Back Torso Block Not Linked to Measurement</option>
              </Select>
              <CapArrows />
            </SelectWrap>
          </ToolGroup>
          <ToolGroup $lead={8}><Handle $dots={9} /></ToolGroup>
          <ToolGroup>
            <ToolButton $width={46} disabled><UndoIcon />Undo</ToolButton>
            <ToolButton $width={46} disabled><UndoIcon flip />Redo</ToolButton>
          </ToolGroup>
          <Handle $dots={9} />
          <ToolGroup $lead={4}>
            <ZoomInput aria-label="Zoom" defaultValue="32.8%" />
            <Stepper>
              <StepButton aria-label="Zoom up">
                <svg width="9" height="6" viewBox="0 0 9 6"><path d="M1.500 4.500L4.500 1.500L7.500 4.500" fill="none" stroke="#ddd" strokeWidth="1.400" /></svg>
              </StepButton>
              <StepButton aria-label="Zoom down">
                <svg width="9" height="6" viewBox="0 0 9 6"><path d="M1.500 1.500L4.500 4.500L7.500 1.500" fill="none" stroke="#ddd" strokeWidth="1.400" /></svg>
              </StepButton>
            </Stepper>
          </ToolGroup>
          <ToolGroup>
            {lenses.map((l) => (
              <ToolButton key={l.kind} $width={l.width}><LensIcon kind={l.kind} />{l.label}</ToolButton>
            ))}
          </ToolGroup>
          <Overflow aria-label="More tools"><Chevrons /></Overflow>
        </Toolbar>

        <Toolbar $height={42}>
          <Handle $dots={6} />
          <ToolGroup $lead={7}>
            <SelectWrap $width={195} $dark>
              <Select $dark aria-label="Font family"><option>Academy Engraved LET</option></Select>
              <CapArrows single />
            </SelectWrap>
            <SelectWrap $width={56} $lead={17}>
              <SizeInput aria-label="Font size" defaultValue="32" />
              <CapArrows />
            </SelectWrap>
          </ToolGroup>
          <ToolGroup $lead={9}>
            <IconButton aria-label="Show point names"><BigEyeIcon /></IconButton>
            <IconButton aria-label="Increase text size"><LetterIcon /></IconButton>
            <IconButton aria-label="Decrease text size"><LetterIcon down /></IconButton>
            <IconButton aria-label="Use tool colour"><BucketIcon /></IconButton>
          </ToolGroup>
          <ToolGroup $lead={7}>
            <SelectWrap $width={80} $dark>
              <Select $dark aria-label="Size preset"><option>Default</option></Select>
              <CapArrows single />
            </SelectWrap>
          </ToolGroup>
          <ToolGroup $lead={7}><Handle $dots={6} /></ToolGroup>
          <ToolGroup>
            <IconButton aria-label="Wireframe"><SquareNodesIcon /></IconButton>
            <IconButton aria-label="Control points"><CurveNodesIcon /></IconButton>
            <IconButton aria-label="Axis origin"><CrosshairIcon /></IconButton>
            <IconButton $active aria-label="Seam allowance"><HatchIcon /></IconButton>
            <IconButton $active aria-label="Grainlines"><SpreadIcon /></IconButton>
            <IconButton $active aria-label="Labels"><TagIcon /></IconButton>
          </ToolGroup>
          <Handle $dots={6} />
          <ToolGroup $lead={7}>
            <SelectWrap $width={194}>
              <Select $indent={48} aria-label="Line colour"><option>Black</option></Select>
              <Swatch />
              <CapArrows />
            </SelectWrap>
            <SelectWrap $width={161} $lead={17}>
              <Select $indent={48} aria-label="Line type"><option>Solidline</option></Select>
              <Swatch $lined />
              <CapArrows />
            </SelectWrap>
          </ToolGroup>
          <Overflow aria-label="More options"><Chevrons /></Overflow>
        </Toolbar>
      </Toolbars>

      <Workspace>
        <Toolbox>
          <TitleBar name="Toolbox" />
          <PointerTool aria-label="Pointer"><PointerGlyph /></PointerTool>
          <Drawers>
            <DrawerTab name="Point" />
            <Tiles>
              {tiles.map((t, i) => (
                <Tile key={t.name} aria-label={t.name} $wide={i === 0}><TileGlyph spec={t} /></Tile>
              ))}
            </Tiles>
            {["Line", "Curve", "Arc", "Operations", "Piece", "Images"].map((n) => (
              <DrawerTab key={n} name={n} />
            ))}
          </Drawers>
        </Toolbox>

        <CanvasArea>
          <CanvasFrame>
            <Sheet><Pattern /></Sheet>
            <VTrack><Thumb /></VTrack>
            <HTrack><Thumb /></HTrack>
            <Corner />
          </CanvasFrame>
        </CanvasArea>

        <RightDock>
          <DockTabs>
            <DockTab $active>Group Manager</DockTab>
            <DockTab>Property Editor</DockTab>
          </DockTabs>
          <Panel>
            <TitleBar name="Group Manager" />
            <PanelBody>
              <GroupTools>
                <GroupTool aria-label="Show all"><EyeGlyph color="#1c1c1c" /></GroupTool>
                <GroupTool aria-label="Hide all"><EyeGlyph color="#6c6c6c" /></GroupTool>
                <GroupTool aria-label="Lock all"><LockGlyph color="#181818" /></GroupTool>
                <GroupTool aria-label="Unlock all"><LockGlyph color="#6c6c6c" /></GroupTool>
                <GroupTool $active aria-label="Add group"><PlusGlyph /></GroupTool>
                <GroupTool aria-label="Remove group"><MinusGlyph /></GroupTool>
                <GroupTool aria-label="Edit group"><PencilGlyph /></GroupTool>
              </GroupTools>
              <SectionTitle>Groups</SectionTitle>
              <Box $share={354}>
                <Tree>
                  <TreeTable>
                    <thead>
                      <tr>
                        <Th $width={17}>V</Th>
                        <Th $width={16}>L</Th>
                        <Th $width={17}>O</Th>
                        <Th $width={17}>C</Th>
                        <Th>
                          <SortRow>
                            Name
                            <svg width="10" height="6" viewBox="0 0 10 6"><path d="M1.500 5L5 1.500L8.500 5" fill="none" stroke="#eee" strokeWidth="1.200" /></svg>
                          </SortRow>
                        </Th>
                      </tr>
                    </thead>
                  </TreeTable>
                </Tree>
              </Box>
              <Splitter />
              <SectionTitle>Objects</SectionTitle>
              <Box $share={286}><ObjectList /></Box>
            </PanelBody>
          </Panel>
        </RightDock>
      </Workspace>

      <StatusBar>
        <StatusText>File loaded</StatusText>
        <StatusField $width={34}>XPos:<StatusInput $width={60} readOnly value="-1.02" /></StatusField>
        <StatusField $width={34}>YPos:<StatusInput $width={60} readOnly value="7.90" /></StatusField>
        <StatusField $width={34}>Units:<StatusInput $width={30} readOnly value="inch" /></StatusField>
        <InfoButton aria-label="Information"><InfoGlyph /></InfoButton>
      </StatusBar>
    </Window>
  );
}
